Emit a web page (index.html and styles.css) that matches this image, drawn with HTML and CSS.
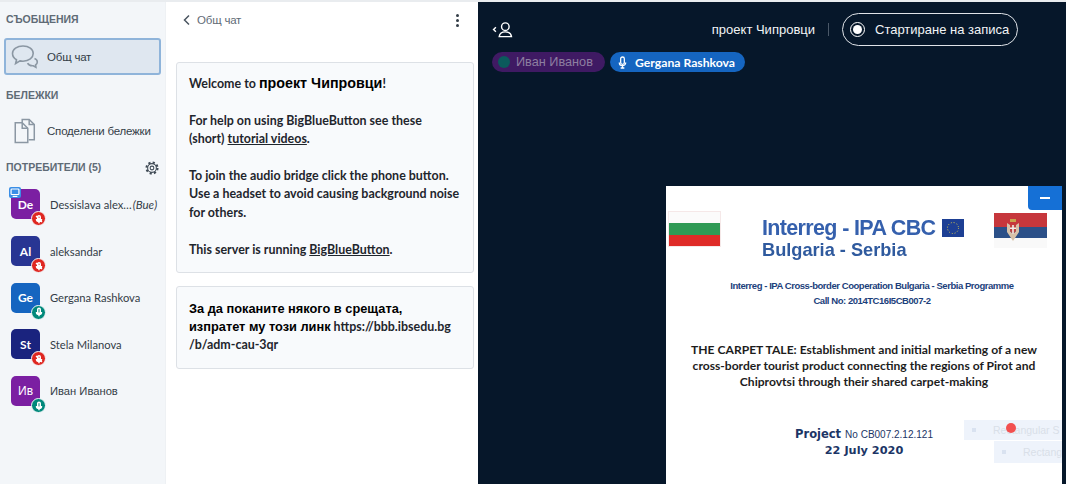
FILE: index.html
```html
<!DOCTYPE html>
<html lang="en">
<head>
    <meta charset="UTF-8">
    <meta name="viewport" content="width=device-width, initial-scale=1.0">
    <title>проект Чипровци</title>
    <link rel="stylesheet" href="styles.css">
</head>
<body>
    <div class="app">
        <!-- Left column: messages, notes, users -->
        <aside class="sidebar">
            <h2 class="side-title">СЪОБЩЕНИЯ</h2>
            <div class="side-row side-row-active">
                <svg class="side-icon" viewBox="0 0 28 26" fill="none" stroke="#8b97a3" stroke-width="1.6">
                    <path d="M12 2C6 2 1.500 5.300 1.500 9.600c0 2.600 1.600 4.800 4 6.200l-.9 3.700 4.400-2.600c1 .2 2 .3 3 .3 6 0 10.200-3.400 10.200-7.600S18 2 12 2z"/>
                    <path d="M23.500 14.500c1.700.6 2.800 1.900 2.800 3.400 0 1.200-.7 2.200-1.700 2.900l.3 2.500-2.600-1.600c-2.600.2-4.900-.8-5.700-2.600"/>
                </svg>
                <span>Общ чат</span>
            </div>

            <h2 class="side-title">БЕЛЕЖКИ</h2>
            <div class="side-row side-row-notes">
                <svg class="side-icon" viewBox="0 0 28 28" fill="none" stroke="#8b97a3" stroke-width="1.6">
                    <path d="M11 5V1.500h7.500l5.500 5.500v16.500h-6"/>
                    <path d="M18.500 1.500V7H24"/>
                    <path d="M3.500 5H11l6 6v15.500H3.500z"/>
                    <path d="M11 5v6h6"/>
                </svg>
                <span>Споделени бележки</span>
            </div>

            <div class="users-head">
                <h2 class="side-title">ПОТРЕБИТЕЛИ (5)</h2>
                <svg class="gear" viewBox="0 0 24 24" fill="none" stroke="#3f4a55">
                    <circle cx="12" cy="12" r="9.500" stroke-width="3.500" stroke-dasharray="3.700 3.760"/>
                    <circle cx="12" cy="12" r="7.500" stroke-width="1.800"/>
                    <circle cx="12" cy="12" r="3.200" stroke-width="1.800"/>
                </svg>
            </div>

            <ul class="users">
                <li class="user">
                    <div class="avatar av-purple">De
                        <span class="presenter">
                            <svg viewBox="0 0 14 14" fill="none" stroke="#fff" stroke-width="1.500"><rect x="2" y="2.500" width="10" height="7" rx="1"/><path d="M4 12h6"/></svg>
                        </span>
                        <span class="status muted"><svg viewBox="0 0 12 12" fill="none" stroke="#fff" stroke-width="1.800"><path d="M6 2a1.500 1.500 0 0 1 1.500 1.500V6a1.500 1.500 0 0 1-3 0V3.500A1.500 1.500 0 0 1 6 2zM3 6a3 3 0 0 0 6 0M6 9v2M2.500 2.500l7 7"/></svg></span>
                    </div>
                    <span class="user-name">Dessislava alex…<em>(Вие)</em></span>
                </li>
                <li class="user">
                    <div class="avatar av-indigo">Al
                        <span class="status muted"><svg viewBox="0 0 12 12" fill="none" stroke="#fff" stroke-width="1.800"><path d="M6 2a1.500 1.500 0 0 1 1.500 1.500V6a1.500 1.500 0 0 1-3 0V3.500A1.500 1.500 0 0 1 6 2zM3 6a3 3 0 0 0 6 0M6 9v2M2.500 2.500l7 7"/></svg></span>
                    </div>
                    <span class="user-name">aleksandar</span>
                </li>
                <li class="user">
                    <div class="avatar av-blue">Ge
                        <span class="status live"><svg viewBox="0 0 12 12" fill="none" stroke="#fff" stroke-width="1.800"><path d="M6 1.500A1.500 1.500 0 0 1 7.500 3v3a1.500 1.500 0 0 1-3 0V3A1.500 1.500 0 0 1 6 1.500zM3 6a3 3 0 0 0 6 0M6 9v2"/></svg></span>
                    </div>
                    <span class="user-name">Gergana Rashkova</span>
                </li>
                <li class="user">
                    <div class="avatar av-navy">St
                        <span class="status muted"><svg viewBox="0 0 12 12" fill="none" stroke="#fff" stroke-width="1.800"><path d="M6 2a1.500 1.500 0 0 1 1.500 1.500V6a1.500 1.500 0 0 1-3 0V3.500A1.500 1.500 0 0 1 6 2zM3 6a3 3 0 0 0 6 0M6 9v2M2.500 2.500l7 7"/></svg></span>
                    </div>
                    <span class="user-name">Stela Milanova</span>
                </li>
                <li class="user">
                    <div class="avatar av-purple avatar-cy">Ив
                        <span class="status live"><svg viewBox="0 0 12 12" fill="none" stroke="#fff" stroke-width="1.800"><path d="M6 1.500A1.500 1.500 0 0 1 7.500 3v3a1.500 1.500 0 0 1-3 0V3A1.500 1.500 0 0 1 6 1.500zM3 6a3 3 0 0 0 6 0M6 9v2"/></svg></span>
                    </div>
                    <span class="user-name cy">Иван Иванов</span>
                </li>
            </ul>
        </aside>

        <!-- Public chat -->
        <section class="chat">
            <header class="chat-head">
                <div class="chat-back">
                    <svg class="chevron" viewBox="0 0 8 12" fill="none" stroke="#4a5560" stroke-width="1.500"><path d="M6 1.500 1.500 6 6 10.500"/></svg>
                    <span>Общ чат</span>
                </div>
                <div class="dots"><i></i><i></i><i></i></div>
            </header>

            <div class="chat-box">
                <p class="welcome">Welcome to <b class="cy">проект Чипровци</b>!</p>
                <p>For help on using BigBlueButton see these<br>(short) <u>tutorial videos</u>.</p>
                <p>To join the audio bridge click the phone button.<br>Use a headset to avoid causing background noise<br>for others.</p>
                <p>This server is running <u>BigBlueButton</u>.</p>
            </div>
            <div class="chat-box">
                <p><span class="cy">За да поканите някого в срещата,</span><br><span class="cy">изпратет му този линк</span> https://bbb.ibsedu.bg<br>/b/adm-cau-3qr</p>
            </div>
        </section>

        <!-- Presentation area -->
        <main class="stage">
            <div class="topbar">
                <svg class="users-toggle" viewBox="0 0 22 18" fill="none" stroke="#fff" stroke-width="1.500">
                    <path d="M4 6.500 1.500 9 4 11.500"/>
                    <circle cx="14" cy="6" r="4"/>
                    <path d="M7.500 16.500c.5-3.500 3-5 6.500-5s6 1.500 6.500 5z"/>
                </svg>
                <div class="topbar-right">
                    <span class="meeting-name">проект Чипровци</span>
                    <span class="divider"></span>
                    <div class="record">
                        <span class="record-dot"></span>
                        <span>Стартиране на записа</span>
                    </div>
                </div>
            </div>

            <div class="talkers">
                <div class="talker talker-idle"><span class="talker-dot"></span>Иван Иванов</div>
                <div class="talker talker-live">
                    <svg class="talker-mic" viewBox="0 0 12 14" fill="none" stroke="#fff" stroke-width="1.400"><path d="M6 1a2 2 0 0 1 2 2v4a2 2 0 0 1-4 0V3a2 2 0 0 1 2-2zM2.500 7a3.500 3.500 0 0 0 7 0M6 10.500V13M4 13h4"/></svg>
                    Gergana Rashkova
                </div>
            </div>

            <div class="slide">
                <button class="minimize"><span></span></button>

                <div class="slide-logos">
                    <div class="flag-bg"><i></i><i></i><i></i></div>
                    <div class="logo">
                        <div class="logo-top">
                            <span class="logo-name">Interreg - IPA CBC</span>
                            <svg class="eu-flag" viewBox="0 0 22 22">
                                <rect width="22" height="18" fill="#1d3f94"/>
                                <circle cx="11" cy="9" r="5.500" fill="none" stroke="#d9c94a" stroke-width="1" stroke-dasharray="1 1.880"/>
                            </svg>
                        </div>
                        <div class="logo-sub">Bulgaria - Serbia</div>
                    </div>
                    <div class="flag-rs">
                        <i></i><i></i><i></i>
                        <svg class="rs-arms" viewBox="0 0 12 24">
                            <path d="M3 1h6v3H3z" fill="#c9a24c"/>
                            <path d="M0 5l3 2v6l3 3 3-3V7l3-2v9l-6 9-6-9z" fill="#d8c2a8"/>
                            <path d="M3 7h6v6l-3 3-3-3z" fill="#c0433f"/>
                            <path d="M5.200 7h1.600v9H5.200zM3 9.500h6v1.500H3z" fill="#f2efe9"/>
                        </svg>
                    </div>
                </div>

                <p class="slide-prog">Interreg - IPA Cross-border Cooperation Bulgaria - Serbia Programme</p>
                <p class="slide-call">Call No: 2014TC16I5CB007-2</p>

                <h1 class="slide-title">THE CARPET TALE: Establishment and initial marketing of a new<br>cross-border tourist product connecting the regions of Pirot and<br>Chiprovtsi through their shared carpet-making</h1>

                <p class="slide-project"><b>Project</b> <span>No CB007.2.12.121</span></p>
                <p class="slide-date">22 July 2020</p>

                <!-- faded selection labels and pointer over the slide -->
                <div class="ghost ghost-one"><i></i>Rectangular S</div>
                <div class="ghost ghost-two"><i></i>Rectang</div>
                <span class="pointer"></span>
            </div>
        </main>
    </div>
</body>
</html>
```

FILE: styles.css
```css
* {
    box-sizing: border-box;
}

html, body {
    height: 100%;
}

body {
    margin: 0;
    overflow: hidden;
    background-color: #fff;
    font-family: 'Lato', 'Liberation Sans', sans-serif;
    color: #222b33;
}

.cy {
    font-family: 'Liberation Sans', sans-serif;
}

.app {
    display: flex;
    height: 484px;
    border-top: 2px solid #e9ecef;
}

/* Sidebar */
.sidebar {
    width: 165px;
    flex-shrink: 0;
    padding: 10px 4px 0;
    background-color: #f3f6f9;
}

.side-title {
    margin: 0;
    padding: 0 2px;
    font-family: 'Liberation Sans', sans-serif;
    font-size: 10.500px;
    line-height: 15px;
    font-weight: 700;
    color: #5f6b76;
}

.side-row {
    display: flex;
    align-items: center;
    height: 37px;
    margin: 11px 0 13px;
    padding-left: 7px;
    font-family: 'Liberation Sans', sans-serif;
    font-size: 11.500px;
    letter-spacing: -0.200px;
    color: #333d47;
    border-radius: 3px;
}

.side-row-active {
    background-color: #dfe7f0;
    border: 2px solid #8fb4da;
    padding-left: 5px;
}

.side-row-notes {
    margin-top: 9px;
}

.side-icon {
    width: 28px;
    height: 26px;
    margin-right: 8px;
}

.users-head {
    display: flex;
    align-items: center;
    justify-content: space-between;
    margin-top: -2px;
    padding-right: 2px;
}

.gear {
    width: 14px;
    height: 14px;
}

.users {
    list-style: none;
    margin: 6px 0 0;
    padding: 0;
}

.user {
    display: flex;
    align-items: center;
    height: 46.700px;
    padding-left: 7px;
    font-size: 11.200px;
}

.user-name {
    margin-left: 10px;
    white-space: nowrap;
    color: #333d47;
}

.user-name em {
    margin-left: 1px;
    font-size: 11.500px;
}

.avatar {
    position: relative;
    display: flex;
    align-items: center;
    justify-content: center;
    flex-shrink: 0;
    width: 29px;
    height: 30px;
    border-radius: 5px;
    color: #fff;
    font-size: 12px;
    font-weight: 700;
}

.avatar-cy {
    font-family: 'Liberation Sans', sans-serif;
    font-weight: 400;
}

.av-purple { background-color: #7b1fa2; }
.av-indigo { background-color: #283593; }
.av-blue { background-color: #1565c0; }
.av-navy { background-color: #1a237e; }

.status {
    position: absolute;
    right: -6px;
    bottom: -7px;
    width: 15px;
    height: 15px;
    padding: 1.500px;
    border-radius: 50%;
    border: 1px solid #f3f6f9;
}

.status svg {
    display: block;
    width: 100%;
    height: 100%;
}

.muted { background-color: #df2721; }
.live { background-color: #00897b; }

.presenter {
    position: absolute;
    left: -2px;
    top: -2px;
    width: 12px;
    height: 11px;
    border-radius: 2px;
    background-color: #3a8ee6;
}

.presenter svg {
    display: block;
    width: 100%;
    height: 100%;
}

/* Chat */
.chat {
    width: 313px;
    flex-shrink: 0;
    padding: 0 4px 0 10px;
    background-color: #fff;
    border-left: 1px solid #eef1f4;
}

.chat-head {
    display: flex;
    align-items: center;
    justify-content: space-between;
    height: 36px;
    margin-bottom: 24px;
    padding: 0 15px 0 7px;
    font-family: 'Liberation Sans', sans-serif;
    font-size: 11.500px;
    letter-spacing: -0.200px;
    color: #5f6b76;
}

.chat-back {
    display: flex;
    align-items: center;
    gap: 6px;
}

.chevron {
    width: 8px;
    height: 12px;
}

.dots {
    display: flex;
    flex-direction: column;
    gap: 2px;
}

.dots i {
    width: 3px;
    height: 3px;
    border-radius: 50%;
    background-color: #333d47;
}

.chat-box {
    margin-bottom: 13px;
    padding: 11px 12px 9px;
    background-color: #f8fafc;
    border: 1px solid #dde1e6;
    border-radius: 3px;
    font-size: 12.450px;
    line-height: 18.400px;
    font-weight: 700;
    color: #1f262d;
    white-space: nowrap;
}

.chat-box + .chat-box {
    padding: 12.500px 12px 9px;
}

.chat-box p {
    margin: 0 0 18.400px;
}

.chat-box p:last-child {
    margin-bottom: 4px;
}

.chat-box .cy {
    font-size: 12.800px;
    font-weight: 700;
    color: #000;
}

.chat-box .welcome .cy {
    font-size: 14.300px;
}

/* Stage */
.stage {
    flex: 1;
    display: flex;
    flex-direction: column;
    padding: 11px 4px 0 14px;
    background-color: #06172a;
    overflow: hidden;
}

.topbar {
    display: flex;
    align-items: center;
    justify-content: space-between;
    height: 33px;
    padding-right: 44px;
}

.users-toggle {
    width: 21px;
    height: 17px;
}

.topbar-right {
    display: flex;
    align-items: center;
    color: #f2f4f6;
    font-size: 13px;
    font-family: 'Liberation Sans', sans-serif;
}

.divider {
    width: 1px;
    height: 13px;
    margin: 0 13px;
    background-color: #4a5868;
}

.record {
    display: flex;
    align-items: center;
    gap: 10px;
    width: 176px;
    height: 33px;
    padding-left: 7px;
    border: 1.500px solid #dfe3e8;
    border-radius: 17px;
    white-space: nowrap;
}

.record-dot {
    flex-shrink: 0;
    width: 15px;
    height: 15px;
    padding: 2px;
    border: 1.500px solid #fff;
    border-radius: 50%;
    background-color: #fff;
    background-clip: content-box;
}

.talkers {
    display: flex;
    gap: 5px;
    margin-top: 6px;
}

.talker {
    display: flex;
    align-items: center;
    height: 20px;
    border-radius: 10px;
    white-space: nowrap;
}

.talker-idle {
    width: 113px;
    padding-left: 6px;
    background-color: #3f1a63;
    color: #8d7ea0;
    font-family: 'Liberation Sans', sans-serif;
    font-size: 12.700px;
}

.talker-dot {
    width: 12px;
    height: 12px;
    margin-right: 6px;
    border-radius: 50%;
    background-color: #0b5a5c;
}

.talker-live {
    width: 135px;
    padding-left: 7px;
    background-color: #1565c0;
    color: #fff;
    font-size: 12.200px;
    font-weight: 700;
}

.talker-mic {
    width: 11px;
    height: 13px;
    margin-right: 7px;
}

.slide {
    position: relative;
    width: 396px;
    height: 298px;
    margin: 114px 0 0 174px;
    padding-top: 26px;
    background-color: #fff;
    text-align: center;
}

.minimize {
    position: absolute;
    right: 0;
    top: 0;
    display: flex;
    align-items: center;
    justify-content: center;
    width: 34px;
    height: 24px;
    padding: 0;
    border: none;
    border-radius: 0 0 0 4px;
    background-color: #1570d6;
}

.minimize span {
    width: 10px;
    height: 1.500px;
    background-color: #fff;
}

.slide-logos {
    display: flex;
    align-items: flex-start;
    height: 48px;
    padding-left: 3px;
    filter: blur(0.400px);
}

.flag-bg {
    display: flex;
    flex-direction: column;
    width: 51px;
    height: 34px;
    outline: 1px solid #f5e8e8;
}

.flag-bg i {
    flex: 1;
}

.flag-bg i:nth-child(1) { background-color: #fbfbfb; }
.flag-bg i:nth-child(2) { background-color: #2f9a55; }
.flag-bg i:nth-child(3) { background-color: #df2b27; }

.logo {
    margin-left: 42px;
    margin-top: 5px;
    text-align: left;
}

.logo-top {
    display: flex;
    align-items: center;
    height: 22px;
}

.logo-name {
    font-family: 'Liberation Sans', sans-serif;
    font-size: 21.500px;
    font-weight: 700;
    color: #3560ad;
    letter-spacing: -0.650px;
}

.eu-flag {
    align-self: flex-start;
    width: 22px;
    height: 22px;
    margin-left: 7px;
    margin-top: 2px;
}

.logo-sub {
    font-family: 'Liberation Sans', sans-serif;
    margin-top: 1px;
    font-size: 18.200px;
    font-weight: 700;
    color: #2f5a9e;
}

.flag-rs {
    position: relative;
    display: flex;
    flex-direction: column;
    width: 53px;
    height: 35px;
    margin-left: 30px;
    margin-top: 1px;
}

.flag-rs i:nth-child(1) { height: 14px; background-color: #c6373c; }
.flag-rs i:nth-child(2) { height: 11px; background-color: #2b5088; }
.flag-rs i:nth-child(3) { height: 10px; background-color: #f9f9f9; }

.rs-arms {
    position: absolute;
    left: 13px;
    top: 5px;
    width: 12px;
    height: 24px;
}

.slide-prog,
.slide-call {
    margin: 0;
    padding-left: 16px;
    font-family: 'Liberation Sans', sans-serif;
    font-size: 9.500px;
    line-height: 15px;
    font-weight: 700;
    color: #1c3f7c;
    letter-spacing: -0.450px;
}

.slide-prog {
    margin-top: 18px;
}

.slide-title {
    margin: 34px 0 0;
    font-family: 'Lato', sans-serif;
    font-size: 12.100px;
    line-height: 16px;
    font-weight: 700;
    color: #1d1d1d;
    white-space: nowrap;
}

.slide-project,
.slide-date {
    margin: 0;
    font-family: 'DejaVu Sans', sans-serif;
    color: #1c3566;
    font-weight: 700;
}

.slide-project {
    margin-top: 36px;
    font-size: 11.500px;
    line-height: 16px;
}

.slide-project span {
    font-family: 'Liberation Sans', sans-serif;
    font-size: 10px;
    font-weight: 400;
}

.slide-date {
    font-size: 11.300px;
    line-height: 15px;
}

.ghost {
    position: absolute;
    right: 0;
    display: flex;
    align-items: center;
    background-color: #eef3fb;
    color: #d9dfe8;
    font-family: 'Liberation Sans', sans-serif;
    font-size: 10.500px;
    white-space: nowrap;
}

.ghost i {
    flex-shrink: 0;
    width: 4px;
    height: 4px;
    margin: 0 17px 0 8px;
    background-color: #d9e2f0;
}

.ghost-one {
    top: 234px;
    width: 98px;
    height: 20px;
}

.ghost-two {
    top: 255px;
    width: 68px;
    height: 22px;
}

.pointer {
    position: absolute;
    left: 340px;
    top: 237px;
    width: 10px;
    height: 10px;
    border-radius: 50%;
    background-color: #f25050;
}
```
